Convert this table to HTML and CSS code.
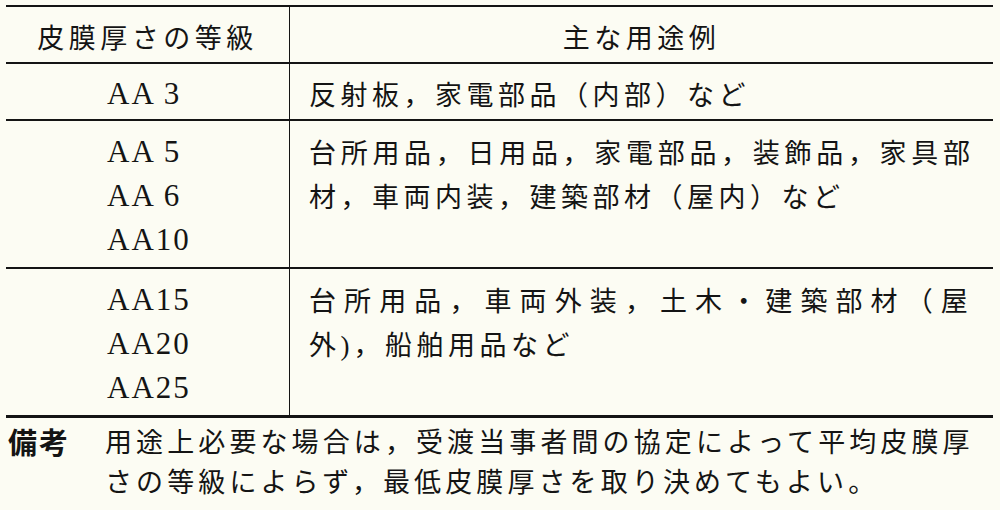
FILE: index.html
```html
<!DOCTYPE html>
<html lang="ja">
<head>
<meta charset="utf-8">
<title>皮膜厚さの等級</title>
<link rel="stylesheet" href="styles.css">
</head>
<body>
<div class="page">
  <table class="grade-table">
    <thead>
      <tr>
        <th class="col-grade">皮膜厚さの等級</th>
        <th class="col-use">主な用途例</th>
      </tr>
    </thead>
    <tbody>
      <tr>
        <td class="col-grade"><span class="grades">AA 3</span></td>
        <td class="col-use">反射板，家電部品（内部）など</td>
      </tr>
      <tr class="multi">
        <td class="col-grade"><span class="grades">AA 5<br>AA 6<br>AA10</span></td>
        <td class="col-use"><span class="wide">台所用品，日用品，家電部品，装飾品，家具部</span><br>材，車両内装，建築部材（屋内）など</td>
      </tr>
      <tr class="multi">
        <td class="col-grade"><span class="grades">AA15<br>AA20<br>AA25</span></td>
        <td class="col-use"><span class="spread">台所用品，車両外装，土木・建築部材（屋</span><br>外<span class="paren">)</span>，船舶用品など</td>
      </tr>
    </tbody>
  </table>
  <div class="note">
    <div class="note-label">備考</div>
    <div class="note-text">用途上必要な場合は，受渡当事者間の協定によって平均皮膜厚<br>さの等級によらず，最低皮膜厚さを取り決めてもよい。</div>
  </div>
</div>
</body>
</html>
```

FILE: styles.css
```css
html, body {
  margin: 0;
  padding: 0;
  background: #fcfcf3;
}

body {
  color: #141414;
  font-family: "Noto Sans CJK JP", "Noto Sans", sans-serif;
  font-weight: 400;
}

.page {
  padding: 5px 0 0 6px;
  width: 987px;
}

.grade-table {
  width: 987px;
  border-collapse: collapse;
  border-top: 2px solid #141414;
  border-bottom: 3px solid #141414;
  table-layout: fixed;
}

.grade-table th,
.grade-table td {
  padding: 8px 0 4px 0;
  line-height: 43px;
  font-size: 27px;
  letter-spacing: 4.5px;
  font-weight: 400;
  vertical-align: top;
  white-space: nowrap;
}

.grade-table tr {
  border-bottom: 2px solid #141414;
}

.grade-table tbody tr:last-child {
  border-bottom: none;
}

.grade-table tr.multi td {
  padding-top: 9px;
  padding-bottom: 5px;
  line-height: 44px;
}

.grade-table th.col-grade,
.grade-table td.col-grade {
  width: 283px;
  border-right: 1.5px solid #141414;
  text-align: center;
}

.grade-table td.col-grade {
  text-align: left;
}

.grade-table th.col-use {
  text-align: center;
}

.grade-table td.col-use {
  text-align: left;
  padding-left: 19px;
}

.grades {
  display: block;
  padding-left: 101px;
  font-family: "Liberation Serif", "Times New Roman", serif;
  font-size: 31px;
  letter-spacing: 2px;
  font-weight: 400;
}

.wide {
  letter-spacing: 4.7px;
}

.spread {
  letter-spacing: 8.1px;
}

.paren {
  font-family: "Liberation Serif", serif;
  letter-spacing: 4px;
}

.note {
  display: flex;
  margin-top: 3px;
}

.note-label {
  width: 97px;
  margin-left: 2px;
  font-size: 29px;
  font-weight: 700;
  letter-spacing: 2px;
  line-height: 40px;
}

.note-text {
  font-size: 27px;
  letter-spacing: 4.1px;
  line-height: 40px;
  white-space: nowrap;
}
```
